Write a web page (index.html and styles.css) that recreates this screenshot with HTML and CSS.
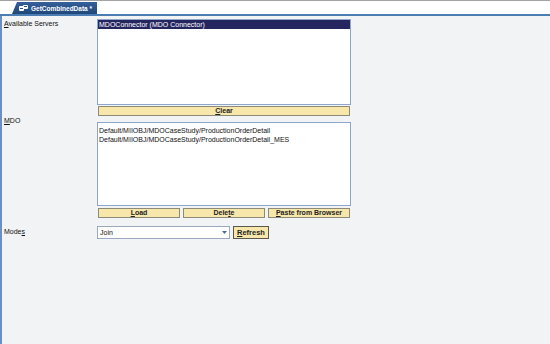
FILE: index.html
```html
<!DOCTYPE html>
<html lang="en">
<head>
    <meta charset="UTF-8">
    <title>GetCombinedData</title>
    <link rel="stylesheet" href="styles.css">
</head>
<body>
    <!-- Tab strip -->
    <div class="tabstrip">
        <div class="tab">
            <svg class="tab-icon" width="9" height="7" viewBox="0 0 9 7">
                <rect x="0" y="1" width="5" height="5" rx="1" fill="#fff"/>
                <rect x="4" y="0" width="5" height="4" rx="1" fill="#fff"/>
                <rect x="1" y="3" width="3" height="1" fill="#2b5487"/>
                <rect x="5" y="1" width="3" height="1" fill="#2b5487"/>
            </svg>
            <span>GetCombinedData *</span>
        </div>
    </div>

    <div class="panel">
        <div class="row">
            <div class="label"><u>A</u>vailable Servers</div>
            <div class="field">
                <div class="listbox servers">
                    <div class="item selected">MDOConnector (MDO Connector)</div>
                </div>
                <div class="btn-row">
                    <button class="btn wide"><u>C</u>lear</button>
                </div>
            </div>
        </div>

        <div class="row">
            <div class="label"><u>M</u>DO</div>
            <div class="field">
                <div class="listbox mdo">
                    <div class="item">Default/MIIOBJ/MDOCaseStudy/ProductionOrderDetail</div>
                    <div class="item">Default/MIIOBJ/MDOCaseStudy/ProductionOrderDetail_MES</div>
                </div>
                <div class="btn-row three">
                    <button class="btn"><u>L</u>oad</button>
                    <button class="btn">Dele<u>t</u>e</button>
                    <button class="btn"><u>P</u>aste from Browser</button>
                </div>
            </div>
        </div>

        <div class="row modes">
            <div class="label">Mode<u>s</u></div>
            <div class="field inline">
                <div class="select">
                    <span>Join</span>
                    <span class="arrow">
                        <svg width="5" height="3" viewBox="0 0 5 3"><path d="M0 0h5L2.5 3z" fill="#4a6d9c"/></svg>
                    </span>
                </div>
                <button class="btn small"><u>R</u>efresh</button>
            </div>
        </div>
    </div>
</body>
</html>
```

FILE: styles.css
```css
body {
    margin: 0;
    font-family: "Liberation Sans", Arial, sans-serif;
    font-size: 7px;
    color: #111;
    background: #f2f3f5;
    height: 344px;
    overflow: hidden;
}
.tabstrip {
    height: 13px;
    background: #fff;
    border-top: 1px solid #a3a3a3;
    border-bottom: 2px solid #4b7db3;
    padding-left: 12px;
    display: flex;
    align-items: flex-end;
}
.tab {
    height: 12px;
    width: 85px;
    background: linear-gradient(#35609a, #1f4779);
    color: #fff;
    font-weight: bold;
    font-size: 6.5px;
    white-space: nowrap;
    display: flex;
    align-items: center;
    gap: 3px;
    padding-left: 7px;
    box-sizing: border-box;
    clip-path: polygon(5px 0, 100% 0, 100% 100%, 0 100%);
}
.tab-icon {
    flex: none;
}
.panel {
    border-left: 2px solid #6b8fc0;
    min-height: 330px;
    padding-top: 3px;
}
.row {
    display: flex;
}
.label {
    width: 95px;
    padding-left: 2px;
    padding-top: 1px;
    box-sizing: border-box;
}
.field {
    width: 254px;
}
.listbox {
    background: #fff;
    border: 1px solid #8ea7c8;
    box-sizing: border-box;
}
.servers {
    height: 86px;
}
.mdo {
    height: 84px;
    padding-top: 3px;
    margin-top: 6px;
}
.item {
    height: 9px;
    line-height: 9px;
    padding-left: 1px;
    white-space: nowrap;
}
.selected {
    background: #25265f;
    color: #fff;
}
.btn-row {
    display: flex;
    gap: 3px;
    padding: 1px 1px 0;
}
.btn-row.three {
    padding-top: 2px;
}
.btn-row.three .btn {
    flex: 1;
}
.btn {
    font-family: inherit;
    font-size: 7px;
    font-weight: bold;
    height: 10px;
    line-height: 8px;
    padding: 0 3px;
    background: #f7e7aa;
    border: 1px solid #8d8a78;
    color: #222;
    cursor: pointer;
}
.btn.wide {
    width: 100%;
}
.modes {
    margin-top: 8px;
}
.modes .label {
    padding-top: 2px;
}
.inline {
    display: flex;
    gap: 3px;
    align-items: center;
}
.select {
    width: 133px;
    height: 13px;
    box-sizing: border-box;
    background: #fff;
    border: 1px solid #9aa9bd;
    display: flex;
    align-items: center;
    justify-content: space-between;
    padding-left: 2px;
}
.arrow {
    width: 9px;
    display: flex;
    justify-content: center;
}
.btn.small {
    height: 13px;
    padding: 0 3px;
    border: 1px solid #59584e;
    font-size: 7.5px;
}
```
